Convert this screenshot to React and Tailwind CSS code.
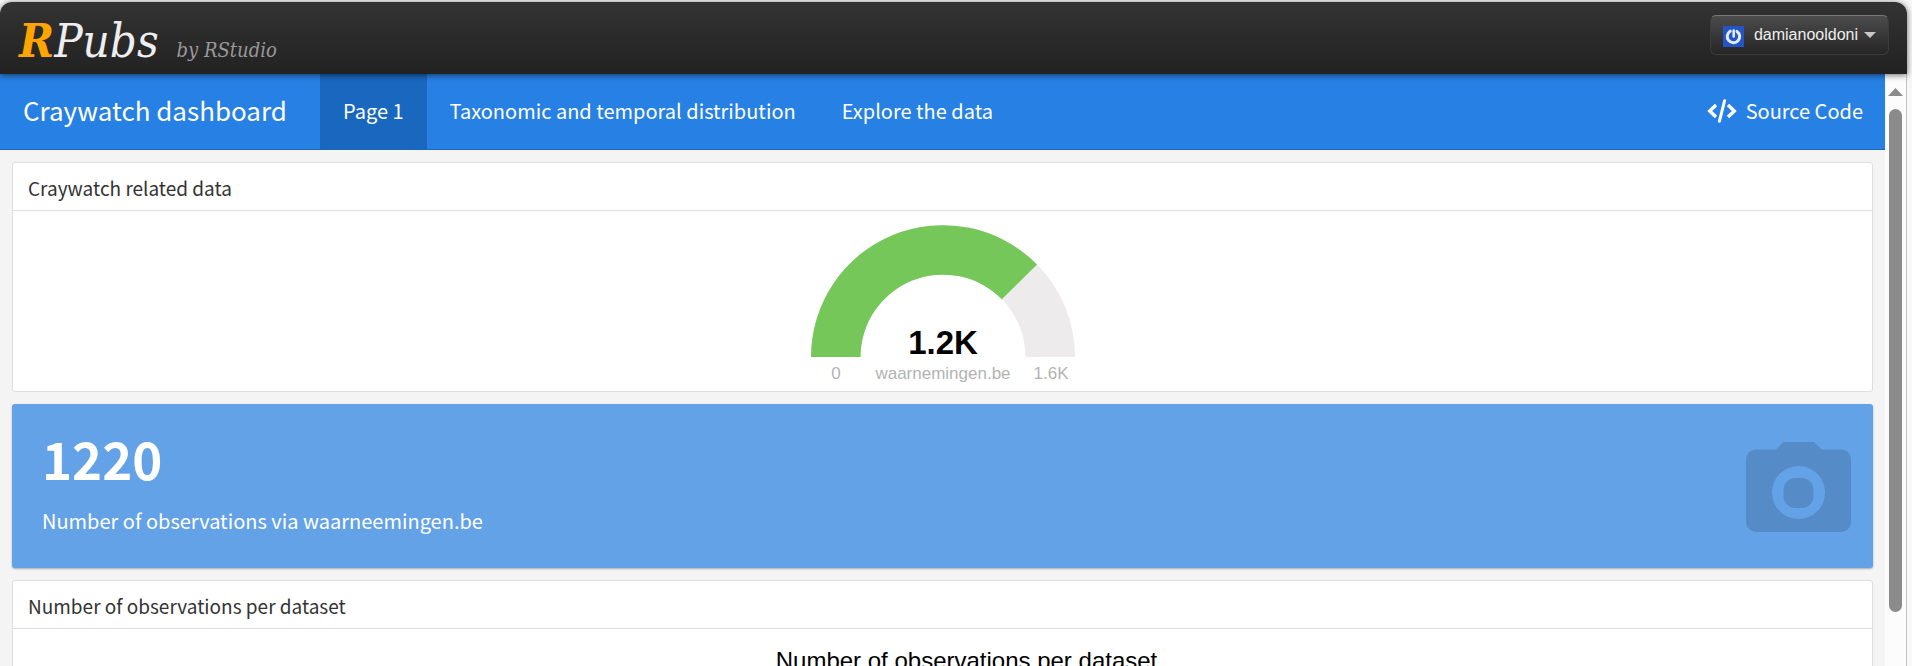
function SiteHeader() {
  return (
    <header className="relative z-10 flex h-[72px] items-start justify-between rounded-t-xl bg-linear-to-b from-[#333] to-[#222] pr-[18px] pl-[19px] shadow-[0_1px_6px_rgba(0,0,0,0.6)]">
      <a href="#home" className="flex items-baseline font-['DejaVu_Serif_Condensed','DejaVu_Serif',serif] italic">
        <span className="text-[47px] leading-[78px] text-[#eee]">
          <b className="text-[#ffa500]">R</b>Pubs
        </span>
        <span className="ml-[18px] text-xl text-[#999]">by RStudio</span>
      </a>
      <button
        type="button"
        className="mt-[13px] flex h-10 items-center gap-[10px] rounded-md border border-[#3c3c3c] border-t-[#777] bg-linear-to-b from-[#4c4c4c] to-[#262626] px-3 font-['Liberation_Sans',Arial,sans-serif] text-base text-[#eee]"
      >
        <svg viewBox="0 0 21 21" className="mt-[3px] size-[21px]" aria-hidden="true">
          <rect width="21" height="21" fill="#2356c4" />
          <path d="M7.2 5.2A6.2 6.2 0 1 0 14 5.4" fill="none" stroke="#e3ebff" strokeWidth="3" strokeLinecap="round" />
          <path d="M10.7 4.5v6" stroke="#e3ebff" strokeWidth="2.6" strokeLinecap="round" />
        </svg>
        <span>damianooldoni</span>
        <svg viewBox="0 0 12 6" className="-ml-1 h-[6px] w-3" aria-hidden="true">
          <path d="M0 0h12L6 6z" fill="#c8c8c8" />
        </svg>
      </button>
    </header>
  );
}

function NavBar() {
  return (
    <nav className="flex h-[76px] items-stretch border-b border-[#1967be] bg-[#2780e3] text-xl text-white">
      <a href="#dashboard" className="mr-[10px] flex items-center px-[23px] pb-[3px] text-[26px]">
        Craywatch dashboard
      </a>
      <a href="#page-1" aria-current="page" className="flex items-center bg-[#1967be] px-[23px] pb-[2px]">
        Page 1
      </a>
      <a href="#taxonomic" className="flex items-center px-[23px] pb-[2px]">
        Taxonomic and temporal distribution
      </a>
      <a href="#explore" className="flex items-center px-[23px] pb-[2px]">
        Explore the data
      </a>
      <a href="#source" className="ml-auto flex items-center gap-[9px] px-[22px] pb-[2px]">
        <svg viewBox="0 0 30 24" className="h-6 w-[30px]" fill="none" stroke="currentColor" strokeWidth="3.4" aria-hidden="true">
          <path d="M9 6L2.700 12L9 18M21 6L27.300 12L21 18" />
          <path d="M17.600 1.700L12.400 22.300" strokeLinecap="round" strokeWidth="3" />
        </svg>
        Source Code
      </a>
    </nav>
  );
}

function Card({ title, children }) {
  return (
    <section className="rounded-[3px] border border-[#dedede] bg-white">
      <h2 className="flex h-[47px] items-center px-[15px] pt-[3px] text-[19px] text-[#333]">{title}</h2>
      <div className="border-t border-[#dedede]">{children}</div>
    </section>
  );
}

function Gauge() {
  return (
    <svg
      viewBox="0 0 270 180"
      className="mx-auto block h-[180px] w-[270px] font-['Liberation_Sans',Arial,sans-serif]"
      textAnchor="middle"
      role="img"
      aria-label="waarnemingen.be gauge"
    >
      <path d="M3 146A132 132 0 0 1 267 146H217.500A82.500 82.500 0 0 0 52.500 146z" fill="#edebeb" />
      <path d="M3 146A132 132 0 0 1 229 53.500L193.800 88.300A82.500 82.500 0 0 0 52.500 146z" fill="#75c75a" />
      <text x="135" y="143" fontSize="33" fontWeight="700" fill="#010101">1.2K</text>
      <g fontSize="17" fill="#b3b3b3">
        <text x="28" y="168">0</text>
        <text x="135" y="168">waarnemingen.be</text>
        <text x="243" y="168">1.6K</text>
      </g>
    </svg>
  );
}

function ValueBox() {
  return (
    <section className="flex h-[164px] items-center justify-between rounded-[3px] bg-[#64a2e8] pr-[22px] pl-[30px] text-white shadow-[0_1px_2px_rgba(0,0,0,0.3)]">
      <div className="pb-[8px]">
        <p className="text-[51px] leading-[60px] font-bold">1220</p>
        <p className="mt-[18px] text-xl leading-[30px]">Number of observations via waarneemingen.be</p>
      </div>
      <svg viewBox="0 0 105 90" className="mt-[2px] h-[90px] w-[105px]" fill="#558bc6" aria-hidden="true">
        <path
          fillRule="evenodd"
          d="M37.500 0H68l7.500 7.500H95a10 10 0 0 1 10 10V80a10 10 0 0 1-10 10H10A10 10 0 0 1 0 80V17.500a10 10 0 0 1 10-10H30zM52.500 24a26.500 26.500 0 1 0 0 53a26.500 26.500 0 1 0 0-53z"
        />
        <rect x="37.500" y="36" width="30" height="30" rx="12" />
      </svg>
    </section>
  );
}

function ScrollRail() {
  return (
    <div className="flex w-[22px] flex-col items-center border-r border-[#c4c4c4] bg-[#fcfcfc] pt-[14px]" aria-hidden="true">
      <svg viewBox="0 0 15 8" className="h-2 w-[15px]" fill="#8b8b8b">
        <path d="M7.500 0L15 8H0z" />
      </svg>
      <div className="mt-[13px] h-[87%] w-[13px] rounded-full bg-[#8b8b8b]" />
    </div>
  );
}

export default function App() {
  return (
    <div className="flex h-screen flex-col overflow-hidden bg-[#f7f7f7] pt-[2px] pr-[5px] font-['Noto_Sans_CJK_SC',sans-serif]">
      <SiteHeader />
      <div className="flex min-h-0 flex-1">
        <div className="min-w-0 flex-1 overflow-hidden bg-[#f4f4f4]">
          <NavBar />
          <main className="flex flex-col gap-3 p-3">
            <Card title="Craywatch related data">
              <Gauge />
            </Card>
            <ValueBox />
            <Card title="Number of observations per dataset">
              <div className="h-96 pt-4 pl-12 text-center font-['Liberation_Sans',Arial,sans-serif] text-2xl text-black">
                Number of observations per dataset
              </div>
            </Card>
          </main>
        </div>
        <ScrollRail />
      </div>
    </div>
  );
}
